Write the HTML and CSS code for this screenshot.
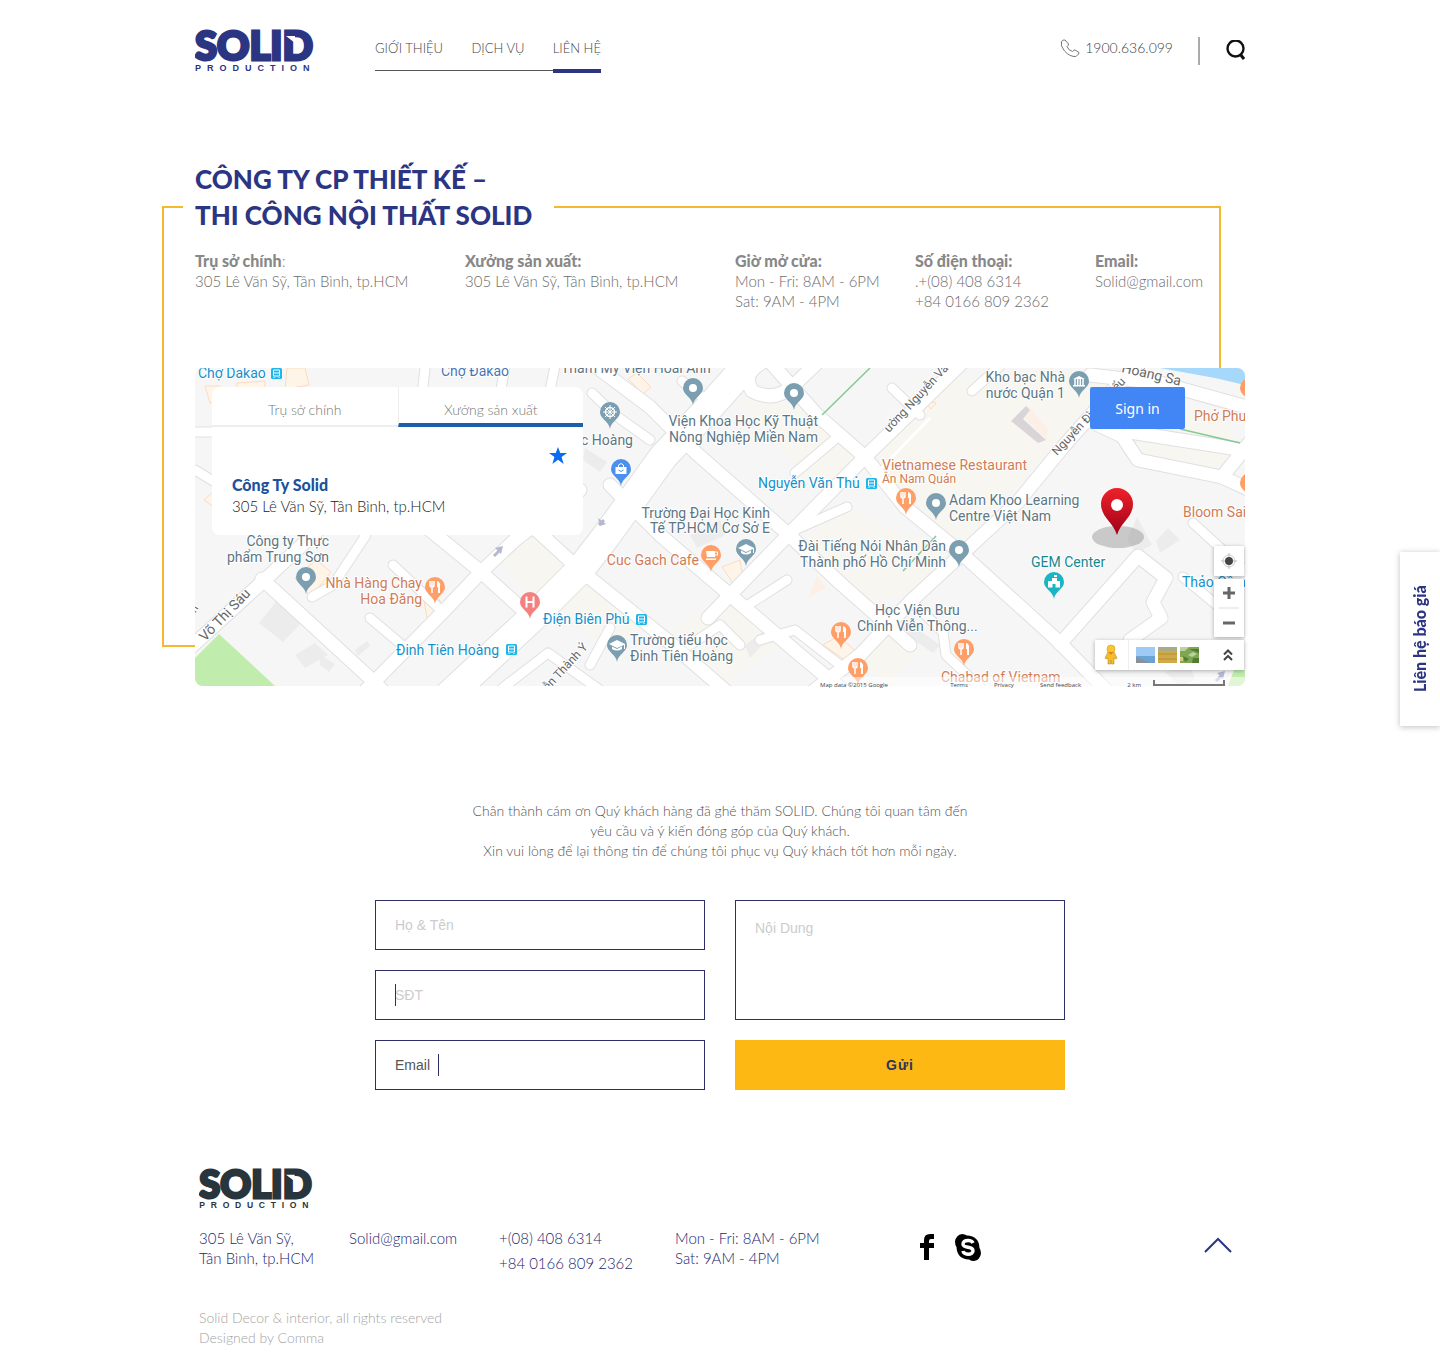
FILE: index.html
```html
<!DOCTYPE html>
<html lang="vi">
<head>
<meta charset="utf-8">
<meta name="viewport" content="width=device-width, initial-scale=1">
<title>Solid Production – Liên hệ</title>
<link rel="stylesheet" href="styles.css">
</head>
<body>
<svg class="defs" aria-hidden="true">
  <defs>
    <symbol id="logo" viewBox="0 0 120 43">
      <text class="logo-name" x="0" y="31">SOLID</text>
      <path class="logo-cut" d="M91 7h9v7z"/>
      <text class="logo-sub" x="0" y="42">PRODUCTION</text>
    </symbol>
    <path id="pin" d="M0 17C-1 9-10 7-10 0A10 10 0 1 1 10 0C10 7 1 9 0 17Z"/>
    <g id="dot-pin"><use href="#pin" fill="#7b9eb0"/><circle r="4" fill="#fff"/></g>
    <g id="food-pin"><use href="#pin" fill="#ff9e67"/><path d="M-5-6v4q0 2 2 2v6M-1-6v4q0 2-2 2M-3-6v5" fill="none" stroke="#fff" stroke-width="1.5"/><path d="M2-6q4 1 3 6v6H3V0H2z" fill="#fff"/></g>
    <g id="edu-pin"><use href="#pin" fill="#7b9eb0"/><path d="M-8-1 0-5 8-1V4H7V0L0 3zM-5 1.500L0 4 5 1.500V4Q0 7-5 4z" fill="#fff"/></g>
    <g id="bus"><rect width="11" height="11" rx="1.500" fill="#1fb6ea"/><path d="M2.500 2h6v6h-6zM3 9v1M8 9v1" fill="none" stroke="#fff"/><path d="M3 5h5" stroke="#fff"/></g>
    <g id="roads-main">
      <path d="M450 694 530 620 580 570 607 535 663 457 707 410 748 364"/>
    </g>
    <g id="roads-mid">
      <path d="M190 648 270 575 318 530 345 470"/>
      <path d="M262 579 372 680 384 692"/>
      <path d="M366 690 443 612 480 573 515 540 580 490"/>
      <path d="M425 526 480 571 523 610"/>
      <path d="M520 515 580 570 667 640 727 692"/>
      <path d="M590 362 650 407 695 452 787 533 840 583 910 645"/>
      <path d="M610 485 660 535 730 595 800 655 845 692"/>
      <path d="M708 618 730 595 790 533 865 457 965 360"/>
      <path d="M772 364 817 415 865 457 905 507 961 553 1057 640 1108 692"/>
      <path d="M812 692 860 655 912 600 963 553 1017 503 1063 447 1138 362"/>
      <path d="M1088 420 1122 436 1138 460 1222 477 1250 490"/>
      <path d="M1090 375 1160 383 1250 408M1130 432 1250 451M1222 477 1250 442"/>
      <path d="M1060 644 1138 556 1166 578 1153 602 1161 618 1130 640"/>
      <path d="M760 364Q742 374 752 391 775 403 794 385L818 362"/>
    </g>
    <g id="roads-small">
      <path d="M393 565 443 612M370 618 408 650M312 597 333 585 366 535"/>
      <path d="M592 393 615 415 650 440M682 381 710 403"/>
      <path d="M795 473 840 435M788 533 847 507M745 607 787 580"/>
      <path d="M892 388 920 415M972 391 1000 366"/>
      <path d="M1193 523 1250 575M1183 577 1225 612"/>
      <path d="M910 600 943 632 946 655 985 692M760 640 795 630 840 665M690 645 720 625 740 645M610 628 590 665M500 690 548 653 600 690"/>
      <path d="M425 368 422 395M505 366 500 395M555 366 548 400M195 432H220M195 470 215 482"/>
    </g>
  </defs>
</svg>

<header class="wrap header">
  <a class="logo" href="#" aria-label="Solid Production"><svg width="120" height="43"><use href="#logo"/></svg></a>
  <nav class="nav">
    <a href="#">GIỚI THIỆU</a>
    <a href="#">DỊCH VỤ</a>
    <a class="active" href="#">LIÊN HỆ</a>
  </nav>
  <div class="tools">
    <a class="phone" href="tel:1900636099">
      <svg width="20" height="19" viewBox="0 0 20 19" fill="none" stroke="#777"><path d="M5 1 8.500 5Q9 6 7 7.500 8 11 12.500 12.500 14 10.500 15 11L19 13.500Q19.500 14.500 16 17.500 10 18 4.500 12 0 6.500 1.500 2.500 3 .5 5 1z"/></svg>
      <span>1900.636.099</span>
    </a>
    <button class="search" aria-label="Tìm kiếm"><svg width="19" height="22" viewBox="0 0 19 22" fill="none" stroke="#111"><circle cx="9.500" cy="8.500" r="8" stroke-width="2.400"/><path d="M14 14 18 19" stroke-width="3"/></svg></button>
  </div>
</header>

<main>
  <section class="wrap company">
    <h1>CÔNG TY CP THIẾT KẾ –<br>THI CÔNG NỘI THẤT SOLID</h1>
    <div class="contacts">
      <div><h2>Trụ sở chính<span>:</span></h2><p>305 Lê Văn Sỹ, Tân Bình, tp.HCM</p></div>
      <div><h2>Xưởng sản xuất:</h2><p>305 Lê Văn Sỹ, Tân Bình, tp.HCM</p></div>
      <div><h2>Giờ mở cửa:</h2><p>Mon - Fri: 8AM - 6PM<br>Sat: 9AM - 4PM</p></div>
      <div><h2>Số điện thoại:</h2><p>.+(08) 408 6314<br>+84 0166 809 2362</p></div>
      <div><h2>Email:</h2><p>Solid@gmail.com</p></div>
    </div>

    <div class="map">
      <svg class="map-canvas" viewBox="195 368 1050 318" preserveAspectRatio="xMidYMid slice" role="img" aria-label="Bản đồ">
        <defs><linearGradient id="red" x1="0" y1="0" x2="0" y2="1"><stop offset="0" stop-color="#ef2229"/><stop offset="1" stop-color="#9d0019"/></linearGradient></defs>
        <rect x="195" y="368" width="1050" height="318" fill="#f6f6f6"/>
        <path fill="#f8f6f0" d="M500 560 530 535 570 572 535 605zM585 575 640 625 610 650 555 605zM740 400 790 400 860 460 830 500 770 440zM870 465 950 380 1050 368 1110 380 1050 450 960 545 910 500zM800 540 850 510 950 555 905 595 860 600zM860 660 910 610 930 640 890 686zM660 640 700 610 735 600 780 645 730 680zM1100 400 1230 420 1240 480 1150 460zM545 480 585 500 560 530z"/>
        <path fill="#ececed" d="M279 598 305 619 283 642 259 623zM295 655 315 643 328 655 305 668zM320 655 335 664 329 672 320 665zM355 650 367 641 370 646 358 656zM1137 517 1152 545 1137 553 1127 540zM1168 528 1180 540 1160 553 1156 541zM690 535 720 520 725 535 697 548zM585 448 607 462 600 472 583 460zM745 645 768 628 772 635 750 658zM905 620 940 645 933 653 900 630zM1165 672 1190 665 1195 680 1180 686z"/>
        <path fill="#fff4e8" stroke="#fbdcc0" d="M287 368H305L309 385 285 389zM237 383 265 381V388H237zM628 379 637 373 651 387 643 394zM722 567 740 560 743 578 733 583zM295 578 316 560 331 572 311 597zM205 386H220L222 400 210 403zM424 600 440 600 440 612 427 619zM204 500 215 490V508zM823 645 838 636 857 652 845 660zM925 401 936 403 931 409z"/>
        <g class="casing"><use href="#roads-small" class="w-small"/><use href="#roads-mid" class="w-mid"/><use href="#roads-main" class="w-main"/></g>
        <g class="road"><use href="#roads-small" class="w-small"/><use href="#roads-mid" class="w-mid"/><use href="#roads-main" class="w-main"/></g>
        <path fill="#fcf0e6" d="M1028 406 1048 428 1047 440 1020 414zM817 575 826 588 808 598z"/><path fill="#d8d4d8" d="M1011 421 1026 406 1030 410 1023 419 1046 440 1038 443z"/>
        <path d="M930 418 865 485" class="alley"/>
        <path fill="#c0ecae" d="M195 658 219 634 275 686H195zM1228 686 1234 670H1245V686z"/>
        <path fill="#a5d8fb" d="M1160 368H1245V385L1215 378z"/>
        <path d="M870 368 822 415M936 536 903 571M1180 429 1240 443" stroke="#85c995" stroke-width="1.500" fill="none"/>
        <path d="M494 556 499 551M599 525 604 520M1216 681 1221 676" stroke="#b5b8d0" stroke-width="3" fill="none"/>
        <path d="M495 548 503 546 501 554zM598 518 600 526 606 524zM1217 673 1225 671 1223 679z" fill="#b5b8d0"/>

        <use href="#dot-pin" x="306" y="577"/><use href="#dot-pin" x="693" y="388"/><use href="#dot-pin" x="794" y="393"/><use href="#dot-pin" x="936" y="503"/><use href="#dot-pin" x="959" y="550"/>
        <use href="#edu-pin" x="746" y="549"/><use href="#edu-pin" x="617" y="645"/>
        <use href="#food-pin" x="435" y="587"/><use href="#food-pin" x="906" y="498"/><use href="#food-pin" x="964" y="649"/><use href="#food-pin" x="841" y="632"/><use href="#food-pin" x="858" y="668"/>
        <use href="#pin" x="1250" y="388" fill="#ff9e67"/><use href="#pin" x="1250" y="483" fill="#ff9e67"/>
        <g transform="translate(610 412)"><use href="#pin" fill="#7b9eb0"/><circle r="4.500" fill="none" stroke="#fff" stroke-width="1.500"/><path d="M-7 0H7M0-7V7M-5-5 5 5M5-5-5 5" stroke="#fff"/></g>
        <g transform="translate(1079 381)"><use href="#pin" fill="#7b9eb0"/><path d="M-6-2 0-5 6-2zM-6 4H6V5.500H-6z" fill="#fff"/><path d="M-4-2V4M-1.300-2V4M1.300-2V4M4-2V4" stroke="#fff" stroke-width="1.500"/></g>
        <g transform="translate(621 469)"><use href="#pin" fill="#4a90ee"/><path d="M-5.500-2H5.500V5H-5.500z" fill="#fff"/><path d="M-2.500-2V-4Q0-7 2.500-4V-2" fill="none" stroke="#fff"/><path d="M-2.500 1Q0 4 2.500 1" fill="none" stroke="#4a90ee"/></g>
        <g transform="translate(711 555)"><use href="#pin" fill="#ff9e67"/><path d="M-5-4H4V2H-4zM-5 3.500H5V5H-5z" fill="#fff"/><path d="M4-3H6.500V0H4" stroke="#fff" fill="none"/></g>
        <g transform="translate(530 602)"><use href="#pin" fill="#f4807f"/><path d="M-3.500-5.500V5.500M3.500-5.500V5.500M-3.500 0H3.500" stroke="#fff" stroke-width="2" fill="none"/></g>
        <g transform="translate(1054 582)"><use href="#pin" fill="#19b5c4"/><path d="M-6-1H-2V-4H3V-1H6V5.500H1.500V2H-1.500V5.500H-6zM0-7H3V-5H0z" fill="#fff"/></g>
        <use href="#bus" x="271" y="368"/><use href="#bus" x="506" y="644"/><use href="#bus" x="636" y="614"/><use href="#bus" x="866" y="478"/>

        <g class="labels">
          <g class="transit"><text x="198" y="378">Chợ Dakao</text><text x="396" y="655">Đinh Tiên Hoàng</text><text x="543" y="624">Điện Biên Phủ</text><text x="758" y="488">Nguyễn Văn Thủ</text><text x="1182" y="587">Thảo Cầm</text></g>
          <text class="area" x="441" y="376">Chợ Đakao</text>
          <text x="561" y="373">Thẩm Mỹ Viện Hoài Anh</text>
          <g class="end"><text x="329" y="546">Công ty Thực</text><text x="329" y="562">phẩm Trung Sơn</text><text x="633" y="445">Ngọc Hoàng</text><text x="770" y="518">Trường Đại Học Kinh</text><text x="770" y="533">Tế TP.HCM Cơ Sở E</text><text x="946" y="551">Đài Tiếng Nói Nhân Dân</text><text x="946" y="567">Thành phố Hồ Chí Minh</text><text x="1065" y="382">Kho bạc Nhà</text><text x="1065" y="398">nước Quận 1</text><text x="818" y="426">Viện Khoa Học Kỹ Thuật</text><text x="818" y="442">Nông Nghiệp Miền Nam</text></g>
          <text x="630" y="645">Trường tiểu học</text><text x="630" y="661">Đinh Tiên Hoàng</text>
          <text x="949" y="505">Adam Khoo Learning</text><text x="949" y="521">Centre Việt Nam</text>
          <text x="875" y="615">Học Viện Bưu</text><text x="857" y="631">Chính Viễn Thông...</text>
          <g class="place"><text x="422" y="588" class="end">Nhà Hàng Chay</text><text x="422" y="604" class="end">Hoa Đăng</text><text x="699" y="565" class="end">Cuc Gach Cafe</text><text x="882" y="470">Vietnamese Restaurant</text><text class="minor" x="882" y="483">Ân Nam Quán</text><text x="1194" y="421">Phở Phượng</text><text x="1183" y="517">Bloom Saigon</text><text x="941" y="682">Chabad of Vietnam</text></g>
          <text class="civic" x="1031" y="567">GEM Center</text>
          <g class="street"><text class="big" transform="translate(205 642) rotate(-46)">Võ Thị Sáu</text><text transform="translate(189 625) rotate(-60)">anh</text><text transform="translate(535 705) rotate(-47)">guyễn Thành Ý</text><text transform="translate(889 433) rotate(-47)">ường Nguyễn Văn Thủ</text><text transform="translate(1057 456) rotate(-47)">Nguyễn Đình Chiểu</text><text class="big" transform="translate(1121 372) rotate(13)">Hoàng Sa</text></g>
        </g>

        <ellipse cx="1118" cy="537" rx="26" ry="11" fill="#8a8a8a" fill-opacity=".42"/>
        <path d="M1117 535C1113 522 1101 517 1101 504A16 16 0 0 1 1133 504C1133 517 1121 522 1117 535Z" fill="url(#red)"/><circle cx="1117" cy="505" r="6" fill="#fff"/>
        <rect x="820" y="677" width="425" height="9" fill="#fff" fill-opacity=".5"/>
      </svg>

      <div class="place-card">
        <div class="tabs"><button>Trụ sở chính</button><button class="selected">Xưởng sản xuất</button></div>
        <div class="place-body">
          <svg width="18" height="17" viewBox="0 0 18 17"><path d="M9 0 11.300 6H18L12.600 10 14.600 17 9 12.800 3.400 17 5.400 10 0 6H6.700z" fill="#0a6cf0"/></svg>
          <strong>Công Ty Solid</strong>
          <p>305 Lê Văn Sỹ, Tân Bình, tp.HCM</p>
        </div>
      </div>
      <button class="sign-in">Sign in</button>

      <div class="controls">
        <button class="panel" aria-label="Vị trí của tôi"><svg width="20" height="20" viewBox="-10 -10 20 20"><circle r="6" fill="none" stroke="#ccc"/><path d="M-8 0H8M0-8V8" stroke="#bbb"/><circle r="4" fill="#444"/></svg></button>
        <div class="panel zoom">
          <button aria-label="Phóng to"><svg width="12" height="12" viewBox="0 0 12 12"><path d="M0 6H12M6 0V12" stroke="#666" stroke-width="3"/></svg></button>
          <button aria-label="Thu nhỏ"><svg width="12" height="12" viewBox="0 0 12 12"><path d="M0 6H12" stroke="#666" stroke-width="3"/></svg></button>
        </div>
        <div class="panel layers">
          <button class="pegman" aria-label="Chế độ phố"><svg width="14" height="22" viewBox="0 0 14 22"><path d="M4 8 1 14 2 15 4 14V20H6.500L7 16 7.500 20H10V14L12 15 13 14 10 8z" fill="#f6bd27" stroke="#b88a2c" stroke-width=".6"/><circle cx="7" cy="5" r="4" fill="#fac62e" stroke="#c9982c" stroke-width=".6"/><path d="M4.500 8H9.500L7 11z" fill="#e57f1c"/></svg></button>
          <button aria-label="Ảnh biển"><svg width="19" height="16"><path fill="#9fcaf4" d="M0 0H19V16H0z"/><path fill="#6ba4d4" d="M0 9H19V16H0z"/><path fill="#8791a0" d="M0 10 8 13 14 16H0z"/></svg></button>
          <button aria-label="Ảnh đồng"><svg width="19" height="16"><path fill="#d0a94b" d="M0 0H19V16H0z"/><path fill="#a9ad86" d="M0 0H19V4H0z"/><path stroke="#b58f2c" d="M0 7H19M0 12H19"/></svg></button>
          <button aria-label="Ảnh rừng"><svg width="19" height="16"><path fill="#7fa650" d="M0 0H19V16H0z"/><path fill="#bcd0a0" d="M0 0H9L5 4H0zM8 8 13 5 17 7 12 10z"/><path fill="#517c35" d="M9 2H19V6zM3 9 9 12 5 15zM13 11H19V16H12z"/><path fill="#d8c880" d="M0 10H3V14H0z"/></svg></button>
          <button class="expand" aria-label="Mở rộng"><svg width="10" height="12" viewBox="0 0 10 12" fill="none" stroke="#444" stroke-width="2"><path d="M1 5.500 5 1.500 9 5.500M1 11 5 7 9 11"/></svg></button>
        </div>
      </div>
      <div class="credits"><span>Map data ©2015 Google</span><a href="#">Terms</a><a href="#">Privacy</a><a href="#">Send feedback</a><span class="scale">2 km <i></i></span></div>
    </div>
  </section>

  <section class="wrap enquiry">
    <p>Chân thành cám ơn Quý khách hàng đã ghé thăm SOLID. Chúng tôi quan tâm đến<br>yêu cầu và ý kiến đóng góp của Quý khách.<br>Xin vui lòng để lại thông tin để chúng tôi phục vụ Quý khách tốt hơn mỗi ngày.</p>
    <form>
      <div class="field"><input type="text" placeholder="Họ &amp; Tên" aria-label="Họ &amp; Tên"></div>
      <div class="field caret"><input type="tel" placeholder="SĐT" aria-label="SĐT"></div>
      <div class="field caret typed"><input type="text" value="Email" aria-label="Email"></div>
      <textarea placeholder="Nội Dung" aria-label="Nội Dung"></textarea>
      <button>Gửi</button>
    </form>
  </section>
</main>

<footer class="wrap footer">
  <a class="logo dark" href="#" aria-label="Solid Production"><svg width="115" height="41"><use href="#logo"/></svg></a>
  <div class="footer-row">
    <p>305 Lê Văn Sỹ,<br>Tân Bình, tp.HCM</p>
    <p><a href="mailto:Solid@gmail.com">Solid@gmail.com</a></p>
    <p class="phones"><span>+(08) 408 6314</span><span>+84 0166 809 2362</span></p>
    <p>Mon - Fri: 8AM - 6PM<br>Sat: 9AM - 4PM</p>
    <div class="social">
      <a href="#" aria-label="Facebook"><svg width="14" height="26" viewBox="0 0 14 26"><path d="M4 26V14H0V9H4V6Q4 0 10 0H14V5H11Q9 5 9 7V9H14V14H9V26z"/></svg></a>
      <a href="#" aria-label="Skype"><svg width="26" height="27" viewBox="0 0 26 27"><path d="M7 0Q10 0 12 1.500 24 2 24.500 14 26 16 26 19.500 25 26 19 27 16 27 14 25.500 2 25 1.500 13 0 11 0 7.500 1 1 7 0z"/><path d="M18 9Q17 6.500 13 6.500 8 6.500 8 10 8 12.500 13 13.300 18 14 18 17 17.500 20.300 13 20.300 8.500 20 8 17" fill="none" stroke="#fff" stroke-width="3.400"/></svg></a>
    </div>
    <a class="to-top" href="#" aria-label="Lên đầu trang"><svg width="28" height="16" viewBox="0 0 28 16" fill="none" stroke="#2b3582" stroke-width="2"><path d="M1 15 14 2 27 15"/></svg></a>
  </div>
  <small>Solid Decor &amp; interior, all rights reserved<br>Designed by Comma</small>
</footer>

<button class="quote-tab">Liên hệ báo giá</button>
</body>
</html>
```

FILE: styles.css
```css
* { box-sizing: border-box; }
body {
  margin: 0;
  background: #fff;
  color: #6c6c6c;
  font: 300 15px/20px Lato, "Open Sans", sans-serif;
}
h1, h2, p { margin: 0; }
a { color: inherit; text-decoration: none; }
button { border: 0; padding: 0; background: none; font: inherit; color: inherit; cursor: pointer; }
svg { display: block; }
.defs { position: absolute; width: 0; height: 0; }
.wrap { max-width: 1050px; margin: 0 auto; }

/* header */
.header { display: flex; align-items: flex-start; padding-top: 29px; }
.logo { color: #2b3582; }
.logo.dark { color: #28353d; }
.logo-name { font: 900 40px Lato, sans-serif; fill: currentColor; stroke: currentColor; stroke-width: 3px; }
.logo-sub { font: 700 9px "Liberation Sans", sans-serif; letter-spacing: 6px; fill: currentColor; }
.logo-cut { fill: #fff; }
.nav {
  display: flex;
  justify-content: space-between;
  width: 226px;
  height: 42px;
  margin-left: 60px;
  border-bottom: 1px solid #555;
  color: #444;
  font-size: 13px;
  line-height: 38px;
}
.nav a { height: 44px; }
.nav .active { border-bottom: 4px solid #2b3582; }
.tools { display: flex; align-items: center; margin: 8px 0 0 auto; }
.phone { display: flex; align-items: center; gap: 5px; height: 28px; padding: 0 25px 6px 0; border-right: 2px solid #aaa; color: #444; font-size: 14px; }
.search { margin-left: 26px; }

/* company block with the yellow frame */
.company { position: relative; z-index: 0; margin-top: 89px; }
.company::before {
  content: "";
  position: absolute;
  z-index: -1;
  inset: 45px 24px 39px -33px;
  border: 2px solid #f6b82f;
}
h1 {
  width: fit-content;
  margin-left: -12px;
  padding: 0 22px 0 12px;
  background: #fff;
  color: #2b3582;
  font-size: 26px;
  font-weight: 900;
  line-height: 36px;
}
.contacts { display: grid; grid-template-columns: 9fr 9fr 6fr 6fr 5fr; padding: 18px 0 57px; }
h2 { color: #888; font-size: 16px; font-weight: 900; line-height: 20px; }
h2 span { font-weight: 300; }

/* map */
.map { position: relative; height: 318px; }
.map-canvas { width: 100%; height: 100%; border-radius: 8px; }
.casing, .road { fill: none; stroke-linecap: round; stroke-linejoin: round; }
.casing { stroke: #e0e0e0; }
.road { stroke: #fff; }
.casing .w-small { stroke-width: 11px; }
.casing .w-mid { stroke-width: 15px; }
.casing .w-main { stroke-width: 30px; }
.road .w-small { stroke-width: 9px; }
.road .w-mid { stroke-width: 13px; }
.road .w-main { stroke-width: 28px; }
.alley { fill: none; stroke: #fff; stroke-width: 3px; }
.labels { font: 400 14px Roboto, sans-serif; fill: #5d7684; stroke: #fff; stroke-width: 2px; stroke-linejoin: round; paint-order: stroke; }
.labels .transit { fill: #1591cc; }
.labels .area { fill: #4a77b4; }
.labels .place { fill: #d07c55; }
.labels .civic { fill: #16898f; }
.labels .end { text-anchor: end; }
.labels .minor, .labels .street { font-size: 12px; }
.labels .street { fill: #666; }
.labels .big { font-size: 14px; }

.place-card { position: absolute; left: 17px; top: 19px; width: 371px; height: 148px; border-radius: 8px; background: #fff; overflow: hidden; }
.tabs { display: grid; grid-template-columns: 1fr 1fr; }
.tabs button { height: 40px; padding-top: 8px; border-bottom: 2px solid #eee; color: #777; font-size: 14px; }
.tabs .selected { padding-top: 10px; border-bottom: 4px solid #1d5fa8; border-left: 1px solid #eee; }
.place-body { padding: 20px 16px 0 20px; color: #222; }
.place-body svg { margin-left: auto; }
.place-body strong { display: block; margin-top: 10px; color: #1c529b; font-size: 16px; font-weight: 900; line-height: 22px; }
.sign-in { position: absolute; right: 60px; top: 19px; width: 95px; height: 42px; border-radius: 2px; background: #4285f4; color: #fff; font: 400 14px "Noto Sans", sans-serif; }

.controls { position: absolute; right: 1px; bottom: 16px; display: flex; flex-direction: column; align-items: flex-end; gap: 3px; }
.panel { display: flex; min-width: 30px; min-height: 30px; align-items: center; justify-content: center; border-radius: 1px; background: #fff; box-shadow: 0 1px 4px rgba(0, 0, 0, .3); }
.zoom { flex-direction: column; }
.zoom button { padding: 8px 4px; }
.zoom button + button { border-top: 2px solid #eee; }
.layers { justify-content: flex-start; gap: 3px; width: 149px; }
.pegman { padding: 4px 10px 4px 9px; margin-right: 4px; border-right: 1px solid #eee; }
.expand { margin: 0 11px 0 auto; }
.credits { position: absolute; right: 20px; bottom: -4px; display: flex; align-items: center; justify-content: space-between; width: 405px; color: #444; font: 400 6px/10px "Open Sans", sans-serif; }
.credits span:first-child { margin-right: 36px; }
.scale { display: flex; gap: 12px; margin-left: 20px; }
.scale i { width: 72px; height: 6px; border: 2px solid #777; border-top: 0; }

/* enquiry */
.enquiry { padding-top: 115px; }
.enquiry p { color: #555; font-size: 14px; text-align: center; }
form {
  display: grid;
  grid-template: repeat(3, 50px) / 1fr 1fr;
  grid-auto-flow: column;
  gap: 20px 30px;
  max-width: 690px;
  margin: 39px auto 0;
}
.field { position: relative; }
input, textarea {
  display: block;
  width: 100%;
  height: 100%;
  padding: 0 19px;
  border: 1px solid #2b2f66;
  border-radius: 0;
  background: #fff;
  color: #555;
  font: 400 14px/20px "Liberation Sans", sans-serif;
  resize: none;
}
textarea { grid-row: span 2; padding-top: 17px; }
::placeholder { color: #ccc; opacity: 1; }
.caret::after { content: ""; position: absolute; left: 20px; top: 14px; width: 1px; height: 22px; background: #2b2f66; }
.typed::after { left: 63px; }
form button { background: #fdb813; color: #2b3560; font: 700 14px "Liberation Sans", sans-serif; letter-spacing: 1px; }

/* footer */
.footer { padding: 78px 0 0 4px; }
.footer-row { display: flex; margin-top: 19px; min-height: 45px; color: #1d2670; }
.footer-row > p { width: 150px; }
.footer-row > .phones { width: 176px; }
.phones span { display: block; margin-bottom: 5px; }
.footer-row > p:nth-child(4) { width: 245px; }
.social { display: flex; gap: 21px; padding-top: 6px; }
.to-top { margin: 9px 13px 0 auto; }
small { display: block; margin-top: 30px; color: #a4a4a4; font-size: 14px; }

.quote-tab {
  position: fixed;
  right: 0;
  top: 552px;
  width: 40px;
  height: 174px;
  background: #fff;
  box-shadow: 0 -1px 6px rgba(0, 0, 0, .25);
  color: #2b3582;
  font-size: 16px;
  font-weight: 900;
  writing-mode: vertical-rl;
  transform: rotate(180deg);
}
```
